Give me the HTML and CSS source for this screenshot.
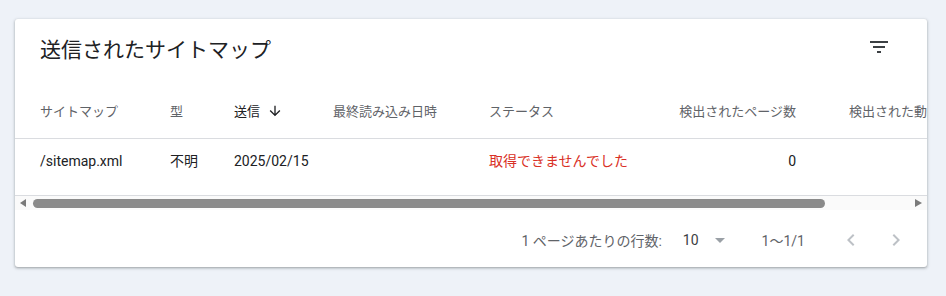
FILE: index.html
```html
<!DOCTYPE html>
<html lang="ja">
<head>
<meta charset="utf-8">
<title>送信されたサイトマップ</title>
<link rel="stylesheet" href="styles.css">
</head>
<body>
<div class="card">
  <div class="card-head">
    <h2 class="title">送信されたサイトマップ</h2>
    <span class="filter-btn">
      <svg width="24" height="24" viewBox="0 0 24 24"><path d="M10 18h4v-2h-4v2zM3 6v2h18V6H3zm3 7h12v-2H6v2z" fill="#3c4043"/></svg>
    </span>
  </div>
  <div class="table">
    <div class="row head">
      <div class="cell">サイトマップ</div>
      <div class="cell">型</div>
      <div class="cell active">送信<svg class="sort" width="16" height="16" viewBox="0 0 24 24"><path d="M20 12l-1.41-1.41L13 16.17V4h-2v12.17l-5.58-5.59L4 12l8 8 8-8z" fill="#202124"/></svg></div>
      <div class="cell">最終読み込み日時</div>
      <div class="cell">ステータス</div>
      <div class="cell num">検出されたページ数</div>
      <div class="cell">検出された動画数</div>
    </div>
    <div class="row body">
      <div class="cell">/sitemap.xml</div>
      <div class="cell">不明</div>
      <div class="cell">2025/02/15</div>
      <div class="cell"></div>
      <div class="cell error">取得できませんでした</div>
      <div class="cell num">0</div>
      <div class="cell"></div>
    </div>
  </div>
  <div class="scrollbar">
    <span class="arrow left"></span>
    <span class="thumb"></span>
    <span class="track-rest"></span>
    <span class="arrow right"></span>
  </div>
  <div class="footer">
    <span class="rows-label">1 ページあたりの行数:</span>
    <span class="rows-value">10</span>
    <span class="dropdown"></span>
    <span class="range">1〜1/1</span>
    <span class="pager">
      <svg width="24" height="24" viewBox="0 0 24 24"><path d="M15.41 7.41L14 6l-6 6 6 6 1.41-1.41L10.83 12z" fill="#bdc1c6"/></svg>
    </span>
    <span class="pager next">
      <svg width="24" height="24" viewBox="0 0 24 24"><path d="M10 6L8.59 7.41 13.17 12l-4.58 4.59L10 18l6-6z" fill="#bdc1c6"/></svg>
    </span>
  </div>
</div>
</body>
</html>
```
FILE: styles.css
```css
* { box-sizing: border-box; }
html, body { margin: 0; padding: 0; }
body {
  background: #eef2f8;
  font-family: "Roboto", "Noto Sans CJK JP", sans-serif;
  color: #202124;
  width: 946px;
  height: 296px;
  overflow: hidden;
}
.card {
  margin: 19px 0 0 15px;
  width: 912px;
  height: 248px;
  background: #fff;
  border-radius: 3px;
  box-shadow: 0 1px 2px rgba(60,64,67,.3), 0 1px 3px 1px rgba(60,64,67,.15);
  overflow: hidden;
}
.card-head {
  display: flex;
  justify-content: space-between;
  align-items: center;
  padding: 17px 36px 19px 25px;
}
.title {
  margin: 0;
  font-size: 21px;
  line-height: 28px;
  font-weight: 400;
  color: #202124;
}
.filter-btn { display: flex; margin-top: -6px; }
.table { overflow: hidden; width: 912px; }
.row {
  display: grid;
  grid-template-columns: 130px 64px 99px 156px 150px 210px 200px;
  padding-left: 25px;
  white-space: nowrap;
}
.row.head {
  height: 56px;
  align-items: center;
  border-bottom: 1px solid #dadce0;
  font-size: 13px;
  color: #5f6368;
}
.row.body {
  padding-top: 12px;
  padding-bottom: 24px;
  font-size: 14px;
  line-height: 20px;
  color: #202124;
}
.cell { display: flex; align-items: center; }
.cell.num { justify-content: flex-end; padding-right: 53px; }
.cell.active { color: #202124; }
.sort { margin-left: 7px; }
.cell.error { color: #d93025; }
.scrollbar {
  display: flex;
  align-items: center;
  height: 15px;
  border-top: 1px solid #dadce0;
  background: #fafafa;
  padding: 0 5px 0 5px;
}
.arrow { width: 0; height: 0; border-top: 4px solid transparent; border-bottom: 4px solid transparent; }
.arrow.left { border-right: 6px solid #7a7a7a; }
.arrow.right { border-left: 7px solid #7a7a7a; }
.thumb {
  margin-left: 7px;
  width: 792px;
  height: 9px;
  border-radius: 5px;
  background: #8a8a8a;
}
.track-rest { flex: 1; }
.footer {
  display: flex;
  justify-content: flex-end;
  align-items: center;
  height: 56px;
  padding: 4px 19px 0 0;
  font-size: 14px;
  color: #5f6368;
}
.rows-value { margin-left: 21px; color: #3c4043; font-size: 14px; }
.dropdown {
  margin-left: 16px;
  width: 0; height: 0;
  border-left: 5.5px solid transparent;
  border-right: 5.5px solid transparent;
  border-top: 5px solid #9aa0a6;
}
.range { margin-left: 37px; }
.pager { display: flex; margin-left: 34px; }
.pager.next { margin-left: 21px; }
```
